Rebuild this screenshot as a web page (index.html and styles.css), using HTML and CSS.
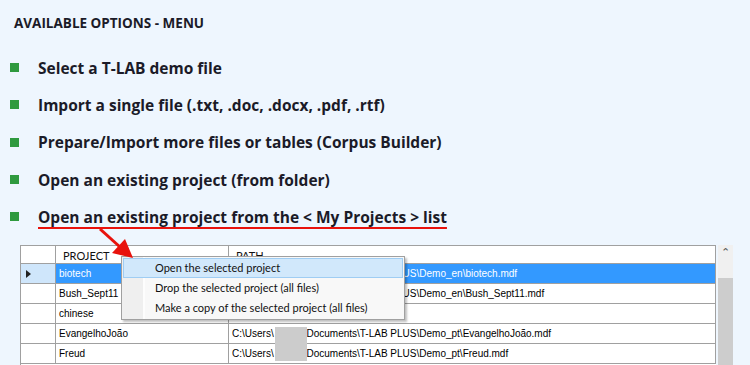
FILE: index.html
```html
<!DOCTYPE html>
<html lang="en">
<head>
<meta charset="UTF-8">
<title>T-LAB - Available options</title>
<link rel="stylesheet" href="styles.css">
</head>
<body>
<h3 class="title">AVAILABLE OPTIONS - MENU</h3>
<ul class="options">
  <li>Select a T-LAB demo file</li>
  <li>Import a single file (.txt, .doc, .docx, .pdf, .rtf)</li>
  <li>Prepare/Import more files or tables (Corpus Builder)</li>
  <li>Open an existing project (from folder)</li>
  <li><span class="marked">Open an existing project from the &lt; My Projects &gt; list</span></li>
</ul>

<svg class="pointer" width="60" height="50" viewBox="0 0 60 50">
  <line x1="10" y1="1" x2="30" y2="19" stroke="#e8120c" stroke-width="3"/>
  <polygon points="43,30 22,25 35,11" fill="#e8120c"/>
</svg>

<div class="grid">
  <div class="table">
    <div class="cell head rowhead"></div>
    <div class="cell head">PROJECT<span class="sort">&#9650;</span></div>
    <div class="cell head">PATH</div>

    <div class="cell rowhead current"><span class="tri"></span></div>
    <div class="cell selected">biotech</div>
    <div class="cell selected">C:\Users\<span class="user"></span>\Documents\T-LAB PLUS\Demo_en\biotech.mdf</div>

    <div class="cell rowhead"></div>
    <div class="cell">Bush_Sept11</div>
    <div class="cell">C:\Users\<span class="user"></span>\Documents\T-LAB PLUS\Demo_en\Bush_Sept11.mdf</div>

    <div class="cell rowhead"></div>
    <div class="cell">chinese</div>
    <div class="cell"></div>

    <div class="cell rowhead"></div>
    <div class="cell">EvangelhoJoão</div>
    <div class="cell">C:\Users\<span class="user"></span>\Documents\T-LAB PLUS\Demo_pt\EvangelhoJoão.mdf</div>

    <div class="cell rowhead"></div>
    <div class="cell">Freud</div>
    <div class="cell">C:\Users\<span class="user"></span>\Documents\T-LAB PLUS\Demo_pt\Freud.mdf</div>
  </div>
  <div class="scroll">
    <div class="scroll-btn">&#8963;</div>
    <div class="scroll-track"></div>
    <div class="scroll-thumb"></div>
  </div>

  <div class="blur"></div>

  <ul class="menu">
    <li class="hover">Open the selected project</li>
    <li>Drop the selected project (all files)</li>
    <li>Make a copy of the selected project (all files)</li>
  </ul>
</div>
</body>
</html>
```
FILE: styles.css
```css
body { margin: 0; background: #eef6fe; font-family: "Open Sans", Arial, sans-serif; color: #1b1b28; position: relative; }
.title { margin: 0; padding: 14px 0 0 14px; font-size: 13.5px; line-height: 18px; font-weight: 700; }

.options { list-style: none; margin: 17px 0 0 0; padding: 0; }
.options li { display: flex; align-items: center; height: 37.3px; font-size: 15.5px; font-weight: 700; }
.options li::before { content: ""; width: 9px; height: 9px; background: #2f9a3f; margin: 0 19px 0 10px; flex: none; }
.marked { text-decoration: underline; text-decoration-color: #e8120c; text-decoration-thickness: 2px; text-underline-offset: 4px; }

/* red arrow pointing at the context menu */
.pointer { position: absolute; left: 90px; top: 228px; z-index: 3; }

.grid { position: relative; display: flex; margin: 10px 0 0 20px; width: 713px; height: 121px; overflow: hidden; }
.table { display: grid; grid-template-columns: 35px 173px 487px; grid-auto-rows: 20px; grid-template-rows: 18px; align-content: start; width: 695px; border-top: 1px solid #a0a0a0; border-left: 1px solid #a0a0a0; background: #fff; font-family: "Liberation Sans", Arial, sans-serif; font-size: 10px; color: #000; }
.cell { border-right: 1px solid #a0a0a0; border-bottom: 1px solid #a0a0a0; padding: 0 3px; display: flex; align-items: center; white-space: nowrap; overflow: hidden; }
.head { font-family: Lato, sans-serif; font-size: 11px; padding-left: 7px; padding-top: 1px; color: #111; }
.head .sort { font-size: 6px; color: #8a8a8a; margin-left: auto; margin-right: 4px; margin-top: 4px; }
.rowhead { padding: 0; }
.current { background: #cfe6fb; }
.tri { width: 0; height: 0; border-top: 4px solid transparent; border-bottom: 4px solid transparent; border-left: 5px solid #222; margin-left: 5px; }
.selected { background: #3399ff; color: #fff; }
.user { display: inline-block; width: 30px; }

.scroll { width: 15px; margin-left: 2px; display: flex; flex-direction: column; background: #f0f0f0; }
.scroll-btn { height: 17px; text-align: center; font-size: 11px; line-height: 16px; color: #555; font-family: "DejaVu Sans", sans-serif; }
.scroll-track { height: 16px; }
.scroll-thumb { flex: 1; background: #cdcdcd; }

/* redacted user name */
.blur { position: absolute; left: 255px; top: 82px; width: 32px; height: 34px; background: #cccccc; }

.menu { position: absolute; left: 101px; top: 11px; width: 280px; margin: 0; padding: 1px; list-style: none; background: #f8f8f8 linear-gradient(to right, #efefef 21px, #fdfdfd 21px, #fdfdfd 23px, transparent 23px); border: 1px solid #a0a0a0; box-shadow: 2px 2px 2px rgba(0,0,0,0.25); font-family: Lato, sans-serif; font-size: 11px; color: #111; }
.menu li { height: 18px; line-height: 18px; padding-left: 31px; border: 1px solid transparent; }
.menu .hover { background: #d1e8fb; border-color: #9fcdf3; }
```
